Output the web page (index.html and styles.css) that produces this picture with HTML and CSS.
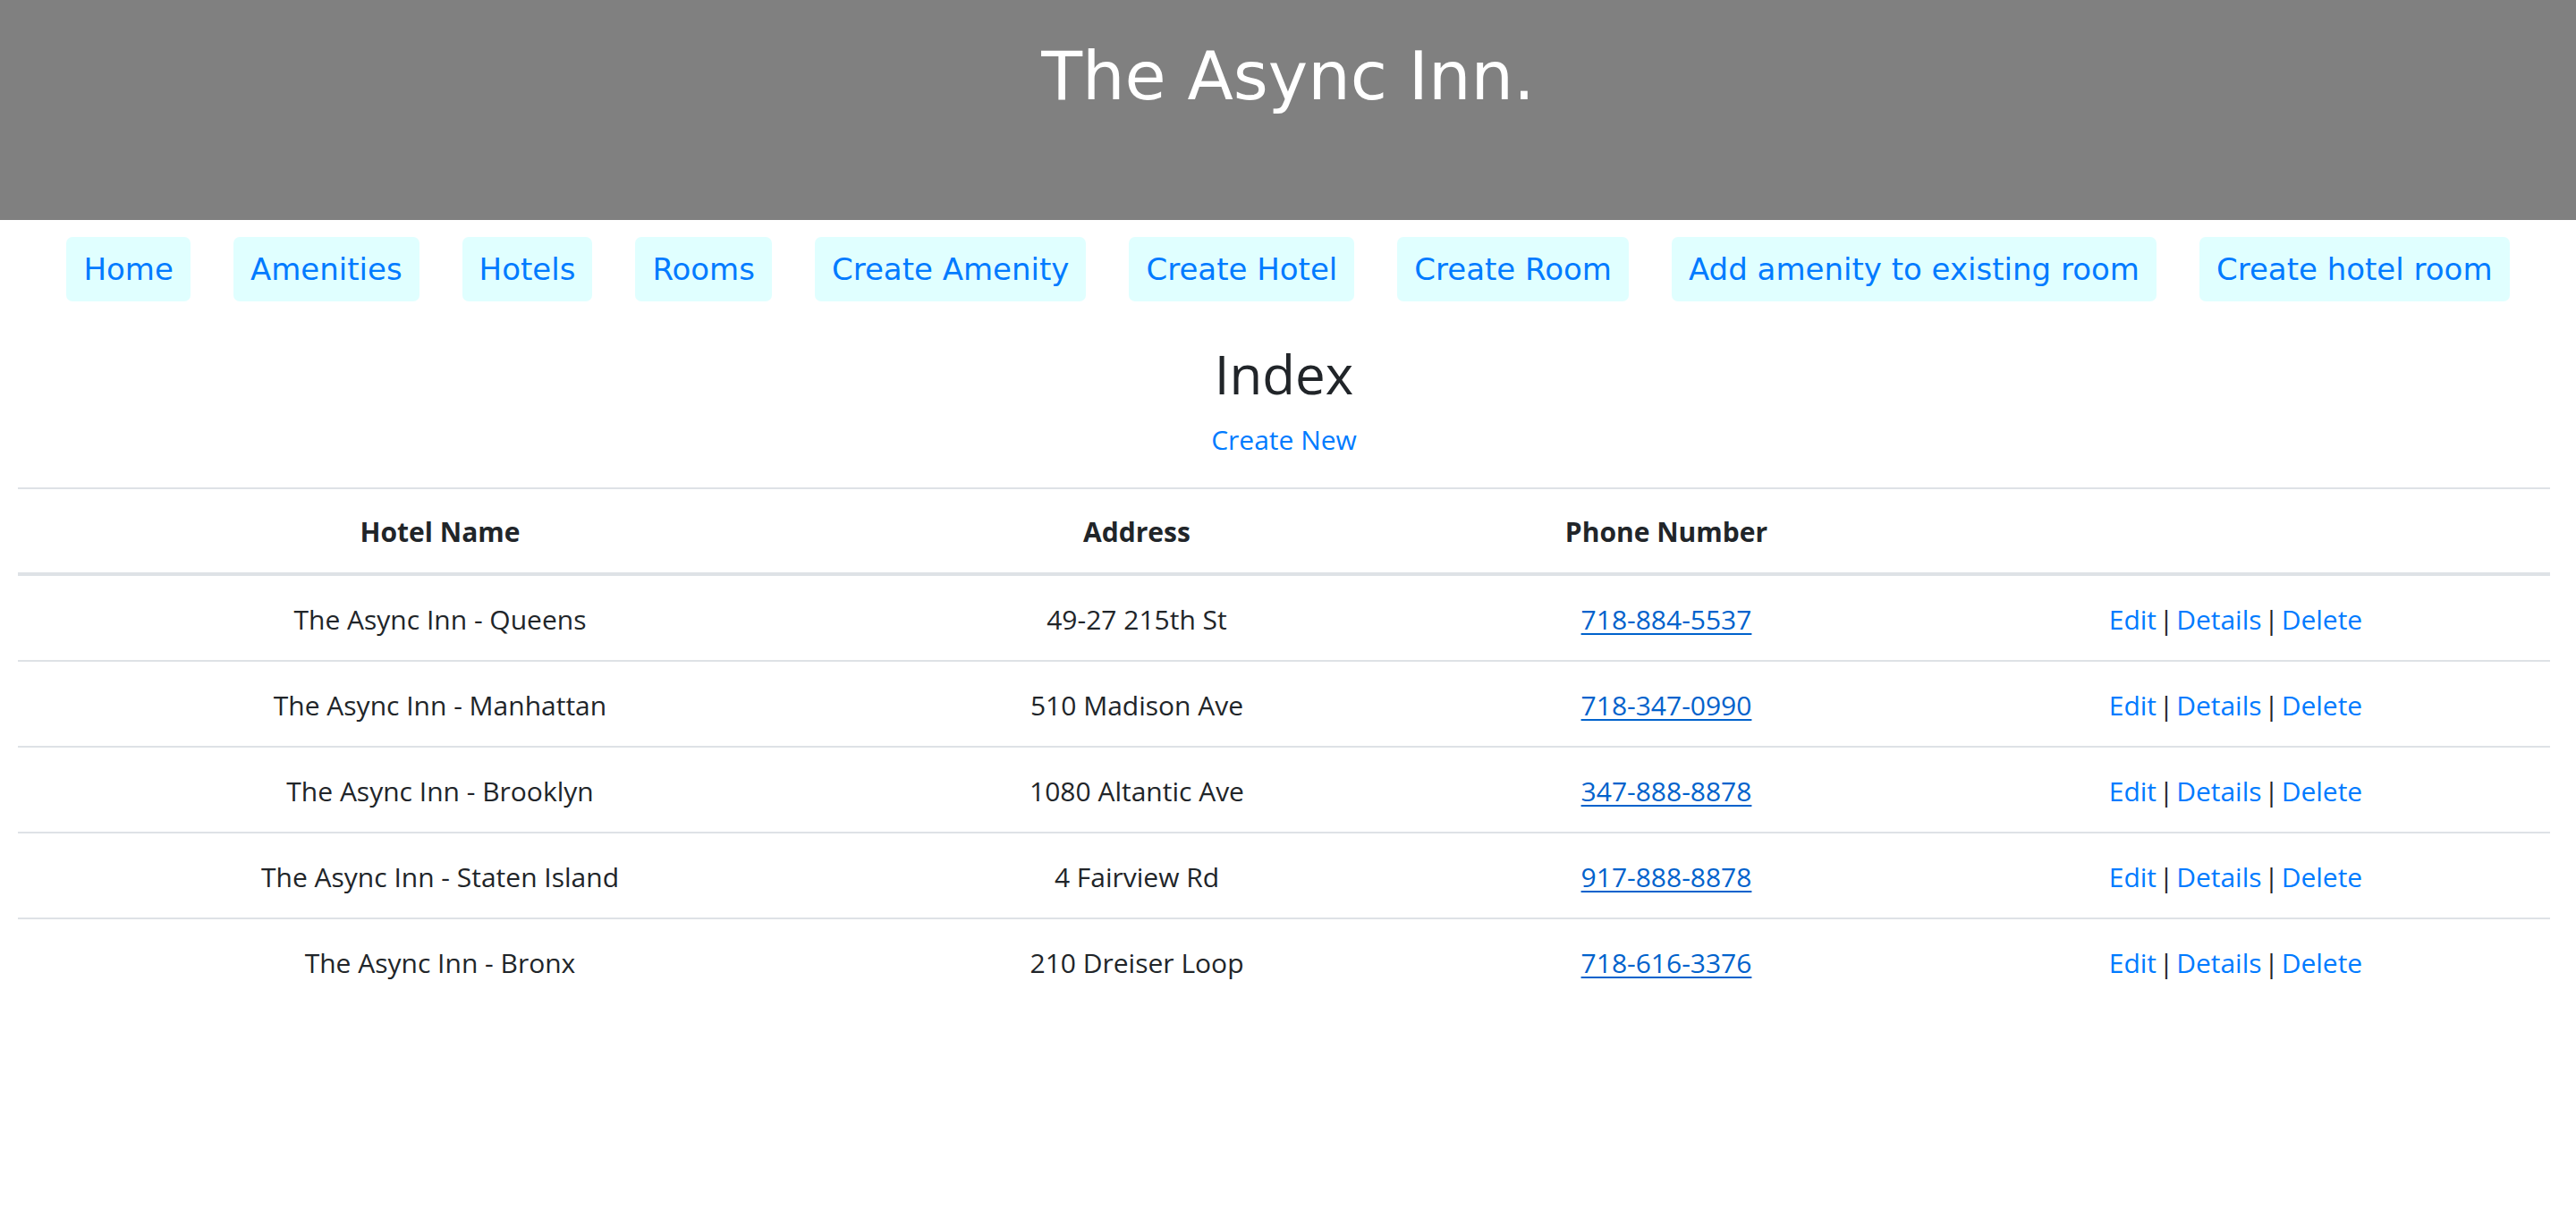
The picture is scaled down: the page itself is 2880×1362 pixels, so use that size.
FILE: index.html
```html
<!DOCTYPE html>
<html lang="en">
<head>
<meta charset="utf-8">
<title>Index - The Async Inn</title>
<link rel="stylesheet" href="styles.css">
</head>
<body>
<header class="site-header">
  <h1 class="site-title">The Async Inn.</h1>
</header>
<nav class="main-nav">
  <a class="nav-btn" href="#">Home</a>
  <a class="nav-btn" href="#">Amenities</a>
  <a class="nav-btn" href="#">Hotels</a>
  <a class="nav-btn" href="#">Rooms</a>
  <a class="nav-btn" href="#">Create Amenity</a>
  <a class="nav-btn" href="#">Create Hotel</a>
  <a class="nav-btn" href="#">Create Room</a>
  <a class="nav-btn" href="#">Add amenity to existing room</a>
  <a class="nav-btn" href="#">Create hotel room</a>
</nav>
<main class="content">
  <h2 class="page-title">Index</h2>
  <p class="create-new"><a class="link" href="#">Create New</a></p>
  <table class="hotel-table">
    <colgroup>
      <col class="col-name">
      <col class="col-address">
      <col class="col-phone">
      <col class="col-actions">
    </colgroup>
    <thead>
      <tr>
        <th>Hotel Name</th>
        <th>Address</th>
        <th>Phone Number</th>
        <th></th>
      </tr>
    </thead>
    <tbody>
      <tr>
        <td>The Async Inn - Queens</td>
        <td>49-27 215th St</td>
        <td><a class="phone" href="#">718-884-5537</a></td>
        <td class="actions"><a class="link" href="#">Edit</a> | <a class="link" href="#">Details</a> | <a class="link" href="#">Delete</a></td>
      </tr>
      <tr>
        <td>The Async Inn - Manhattan</td>
        <td>510 Madison Ave</td>
        <td><a class="phone" href="#">718-347-0990</a></td>
        <td class="actions"><a class="link" href="#">Edit</a> | <a class="link" href="#">Details</a> | <a class="link" href="#">Delete</a></td>
      </tr>
      <tr>
        <td>The Async Inn - Brooklyn</td>
        <td>1080 Altantic Ave</td>
        <td><a class="phone" href="#">347-888-8878</a></td>
        <td class="actions"><a class="link" href="#">Edit</a> | <a class="link" href="#">Details</a> | <a class="link" href="#">Delete</a></td>
      </tr>
      <tr>
        <td>The Async Inn - Staten Island</td>
        <td>4 Fairview Rd</td>
        <td><a class="phone" href="#">917-888-8878</a></td>
        <td class="actions"><a class="link" href="#">Edit</a> | <a class="link" href="#">Details</a> | <a class="link" href="#">Delete</a></td>
      </tr>
      <tr>
        <td>The Async Inn - Bronx</td>
        <td>210 Dreiser Loop</td>
        <td><a class="phone" href="#">718-616-3376</a></td>
        <td class="actions"><a class="link" href="#">Edit</a> | <a class="link" href="#">Details</a> | <a class="link" href="#">Delete</a></td>
      </tr>
    </tbody>
  </table>
</main>
</body>
</html>
```
FILE: styles.css
```css
* {
  box-sizing: border-box;
}

html, body {
  margin: 0;
  padding: 0;
  background: #ffffff;
}

body {
  font-family: "Open Sans", "Noto Sans", sans-serif;
  font-size: 30px;
  line-height: 48px;
  color: #212529;
}

.site-header {
  height: 246px;
  background: #808080;
  padding-top: 41px;
  text-align: center;
}

.site-title {
  margin: 0;
  font-family: "DejaVu Sans", Verdana, sans-serif;
  font-size: 75px;
  font-weight: normal;
  line-height: 88px;
  color: #ffffff;
}

.main-nav {
  display: flex;
  justify-content: center;
  gap: 48px;
  margin-top: 19px;
}

.nav-btn {
  display: block;
  height: 72px;
  padding: 0 19px;
  background: #e0ffff;
  border-radius: 7px;
  font-family: "DejaVu Sans", Verdana, sans-serif;
  font-size: 34px;
  line-height: 72px;
  color: #007bff;
  text-decoration: none;
  white-space: nowrap;
}

.content {
  padding: 0 29px 0 20px;
  text-align: center;
}

.page-title {
  margin: 45px 0 14px;
  font-size: 60px;
  font-weight: 400;
  line-height: 72px;
  color: #212529;
}

.create-new {
  margin: 0 0 29px;
}

.link {
  color: #007bff;
  text-decoration: none;
}

.phone {
  color: #0062cc;
  text-decoration: underline;
  text-decoration-thickness: 2px;
  text-underline-offset: 4px;
}

.hotel-table {
  width: 100%;
  table-layout: fixed;
  border-collapse: separate;
  border-spacing: 0;
}

.col-name { width: 944px; }
.col-address { width: 614px; }
.col-phone { width: 570px; }
.col-actions { width: 703px; }

.hotel-table th,
.hotel-table td {
  text-align: center;
  vertical-align: top;
  line-height: 48px;
  border-top: 2px solid #dee2e6;
}

.hotel-table th {
  padding: 24px 0 21px;
  font-weight: 700;
  border-bottom: 4px solid #dee2e6;
}

.hotel-table td {
  padding: 25px 0 21px;
}

.hotel-table td.actions {
  word-spacing: -5px;
}

.hotel-table tbody tr:first-child td {
  border-top: 0;
}
```
